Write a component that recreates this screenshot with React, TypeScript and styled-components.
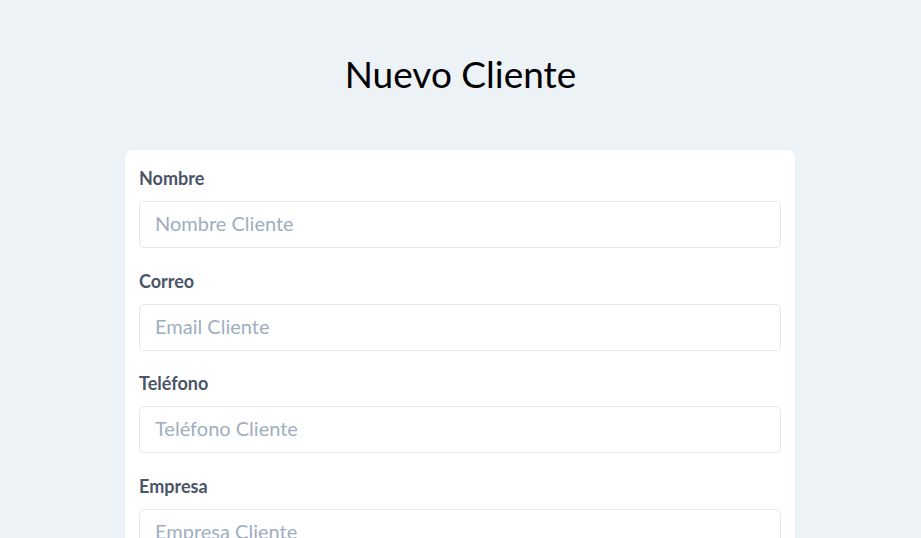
import React from "react";
import styled, { createGlobalStyle } from "styled-components";

const Global = createGlobalStyle`
  html, body { margin: 0; padding: 0; background: #edf2f7; }
  body { font-family: Lato, "Noto Sans", sans-serif; }
  * { box-sizing: border-box; }
`;

const Page = styled.main`
  min-height: 538px;
  background: #edf2f7;
  padding-top: 54px;
  display: flex;
  flex-direction: column;
  align-items: center;
`;

const Title = styled.h1`
  margin: 0 0 56px;
  font-size: 37px;
  line-height: 40px;
  font-weight: 400;
  color: #000;
`;

const Card = styled.form`
  width: 670px;
  margin-right: 1px;
  background: #fff;
  border-radius: 8px;
  box-shadow: 0 1px 2px rgba(0, 0, 0, 0.04);
  padding: 14px 14px;
  display: flex;
  flex-direction: column;
  gap: 18.5px;
`;

const Field = styled.div`
  display: flex;
  flex-direction: column;
  gap: 9px;
`;

const Label = styled.label`
  font-size: 18px;
  line-height: 28px;
  font-weight: 700;
  color: #4a5568;
`;

const Input = styled.input`
  width: 100%;
  height: 47px;
  border: 1px solid #e2e8f0;
  border-radius: 5px;
  padding: 0 15px 3px;
  font-family: Lato, "Noto Sans", sans-serif;
  font-size: 20px;
  color: #4a5568;
  background: #fff;
  outline: none;
  &::placeholder { color: #a0aec0; }
`;

const fields = [
  { id: "nombre", label: "Nombre", placeholder: "Nombre Cliente" },
  { id: "correo", label: "Correo", placeholder: "Email Cliente" },
  { id: "telefono", label: "Teléfono", placeholder: "Teléfono Cliente" },
  { id: "empresa", label: "Empresa", placeholder: "Empresa Cliente" },
];

export default function App() {
  return (
    <>
      <Global />
      <Page>
        <Title>Nuevo Cliente</Title>
        <Card>
          {fields.map((f) => (
            <Field key={f.id}>
              <Label htmlFor={f.id}>{f.label}</Label>
              <Input id={f.id} placeholder={f.placeholder} />
            </Field>
          ))}
        </Card>
      </Page>
    </>
  );
}
